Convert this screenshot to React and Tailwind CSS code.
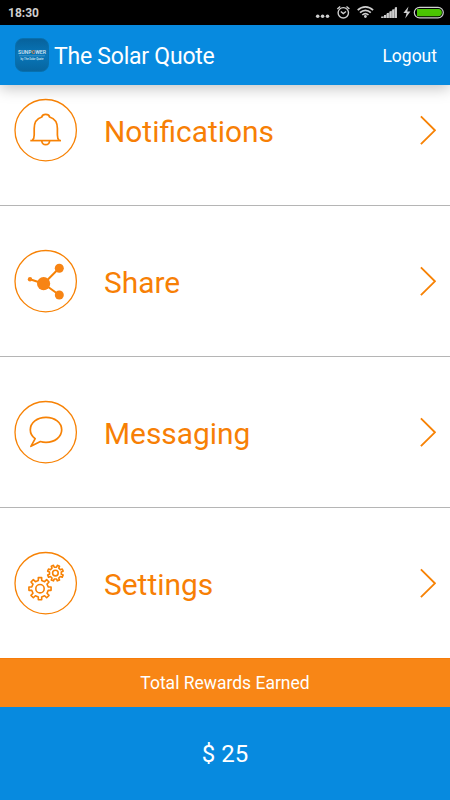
import React from "react";

function gearPath(cx, cy, outer, inner, turn = 0) {
  const teeth = 8;
  const step = (Math.PI * 2) / teeth;
  const points = [];
  for (let i = 0; i < teeth; i++) {
    const a = (i + turn) * step - Math.PI / 2;
    [
      [inner, -0.26],
      [outer, -0.19],
      [outer, 0.19],
      [inner, 0.26],
    ].forEach(([r, offset]) => {
      const t = a + offset * step;
      points.push(
        `${(cx + r * Math.cos(t)).toFixed(2)} ${(cy + r * Math.sin(t)).toFixed(2)}`
      );
    });
  }
  return `M${points.join("L")}Z`;
}

function BellIcon() {
  return (
    <g strokeWidth="1.7">
      <path d="M16.3 42.6H47" />
      <path d="M18.3 42.3C20 41 20.2 39.5 20.2 37V30.5C20.2 24.5 22.6 20.6 27.8 19C28.2 17.2 29.6 16.4 31.7 16.4C33.8 16.4 35.2 17.2 35.6 19C40.8 20.6 43.4 24.5 43.4 30.5V37C43.4 39.5 43.6 41 45.2 42.3" />
      <path d="M27.8 43C28 45.4 29.5 46.7 31.7 46.7C33.9 46.7 35.4 45.4 35.6 43" />
    </g>
  );
}

function ShareIcon() {
  return (
    <g>
      <path d="M16 30.3L29.7 34.7L45.3 19M29.7 34.7L45.3 46" strokeWidth="2" />
      <g fill="#f78414" stroke="none">
        <circle cx="16" cy="30.3" r="2.2" />
        <circle cx="29.6" cy="34.7" r="6.6" />
        <circle cx="45.3" cy="19.2" r="4.5" />
        <circle cx="45.3" cy="46" r="4.5" />
      </g>
    </g>
  );
}

function MessageIcon() {
  return (
    <path
      d="M21.2 38.7C18 36.5 16.3 33.4 16.3 29.8C16.3 22.7 23.2 17.3 32 17.3C40.8 17.3 47.7 22.7 47.7 29.8C47.7 36.9 40.8 42.3 32 42.3C30 42.3 28.2 42.1 26.4 41.5L16.9 46.3L21.2 38.7Z"
      strokeWidth="1.7"
    />
  );
}

function GearsIcon() {
  return (
    <g strokeWidth="1.6">
      <path d={gearPath(26, 37.7, 11.2, 8.4)} />
      <circle cx="26" cy="37.7" r="4.2" />
      <path d={gearPath(41.4, 22.1, 8, 6, 0.5)} />
      <circle cx="41.4" cy="22.1" r="2.8" />
    </g>
  );
}

const menuItems = [
  { label: "Notifications", Icon: BellIcon },
  { label: "Share", Icon: ShareIcon },
  { label: "Messaging", Icon: MessageIcon },
  { label: "Settings", Icon: GearsIcon },
];

function StatusBar() {
  return (
    <div className="flex h-[25px] shrink-0 items-center justify-between bg-black pl-2 text-[#d0d0d0]">
      <span className="text-xs font-bold">18:30</span>
      <svg width="136" height="25" viewBox="314 0 136 25" fill="none" stroke="#d0d0d0">
        {/* More */}
        <g fill="#d0d0d0" stroke="none">
          <circle cx="317.7" cy="16.2" r="1.8" />
          <circle cx="322.6" cy="16.2" r="1.8" />
          <circle cx="327.5" cy="16.2" r="1.8" />
        </g>
        {/* Alarm */}
        <circle cx="343.3" cy="12.8" r="5.2" strokeWidth="1.4" />
        <path d="M340.8 11.5L343.3 13.6L346 11.5M337.3 9L340.2 6.5M346.5 6.5L349.4 9" strokeWidth="1.4" />
        {/* Wifi */}
        <path d="M357.7 10.2C362.2 5.8 368.6 5.8 373.1 10.2M360 12.7C363.2 9.5 367.6 9.5 370.8 12.7M362.3 15C364.2 13.2 366.6 13.2 368.5 15" strokeWidth="1.7" />
        <circle cx="365.4" cy="16.5" r="1.4" fill="#d0d0d0" stroke="none" />
        {/* Signal */}
        <path d="M381 18L397 7V18Z" fill="#777" stroke="none" />
        <path d="M382.2 18V16.6M385 18V15M387.8 18V13M390.6 18V11.2M393.2 18V9.4M395.9 18V7.3" strokeWidth="2" />
        {/* Battery */}
        <path d="M408.5 6.5L403.4 13H406.6L405.2 18.5L410.4 11.6H407.2Z" fill="#d0d0d0" stroke="none" />
        <rect x="414.3" y="7.3" width="29" height="10.6" rx="5.3" strokeWidth="1.2" />
        <path d="M417 9H438.5C443 9 443 16.2 438.5 16.2H417Z" fill="#4bc502" stroke="none" />
      </svg>
    </div>
  );
}

function AppLogo() {
  return (
    <div className="flex h-[34px] w-[34px] items-center justify-center rounded-lg border border-[#0870ae] bg-linear-to-b from-[#07629c] via-[#0876b9] to-[#07659f]">
      <svg
        className="overflow-visible"
        width="32"
        height="32"
        viewBox="0 0 32 32"
        fill="#d8e8f3"
        fontFamily="Roboto, sans-serif"
        textAnchor="middle"
      >
        <text x="16" y="15" fontSize="5.2" fontWeight="500">
          SUNP<tspan fill="#e08a35">O</tspan>WER
        </text>
        <path d="M3 16.8H29" stroke="#5aa1cc" strokeWidth=".7" />
        <text x="16" y="21.4" fontSize="2.7" fontWeight="500">by The Solar Quote</text>
      </svg>
    </div>
  );
}

function MenuRow({ label, Icon }) {
  return (
    <button className="flex h-[151px] w-full shrink-0 items-center border-t border-[#b5b5b5] pr-3.5 pl-3.5 text-left text-[#f77f05]">
      <svg width="64" height="64" viewBox="0 0 64 64" fill="none" stroke="#f78205" strokeLinejoin="round">
        <circle cx="31.7" cy="32.2" r="30.7" strokeWidth="1.3" />
        <Icon />
      </svg>
      <span className="ml-[26px] flex-1 pt-[3px] text-[29.9px] leading-9">{label}</span>
      <svg width="17" height="30" viewBox="0 0 17 30" fill="none" stroke="#f78205" strokeWidth="1.9">
        <path d="M1.9 1.4L15.9 15.3L1.9 29.2" />
      </svg>
    </button>
  );
}

export default function App() {
  return (
    <div className="flex h-[800px] w-[450px] flex-col overflow-hidden bg-white font-['Roboto',sans-serif]">
      <StatusBar />

      {/* Header */}
      <header className="z-10 flex h-[60px] shrink-0 items-center justify-between bg-[#078adf] pr-[13px] pl-[15px] text-white shadow-[0_3px_14px_rgba(0,0,0,0.25)]">
        <div className="flex items-center gap-[5px]">
          <AppLogo />
          <h1 className="pt-1 text-[23px] leading-8 tracking-[-0.23px]">The Solar Quote</h1>
        </div>
        <button className="pt-0.5 text-[17.5px]">Logout</button>
      </header>

      {/* Menu, scrolled to the end */}
      <main className="flex min-h-0 flex-1 flex-col justify-end overflow-hidden">
        {menuItems.map((item) => (
          <MenuRow key={item.label} {...item} />
        ))}
      </main>

      {/* Rewards */}
      <footer className="shrink-0 text-center text-white">
        <div className="flex h-[49px] items-center justify-center border-t border-[#f77c09] bg-[#f88616] pt-px text-[17.5px]">
          Total Rewards Earned
        </div>
        <div className="flex h-[93px] items-center justify-center bg-[#078adf] text-2xl">
          $ 25
        </div>
      </footer>
    </div>
  );
}
